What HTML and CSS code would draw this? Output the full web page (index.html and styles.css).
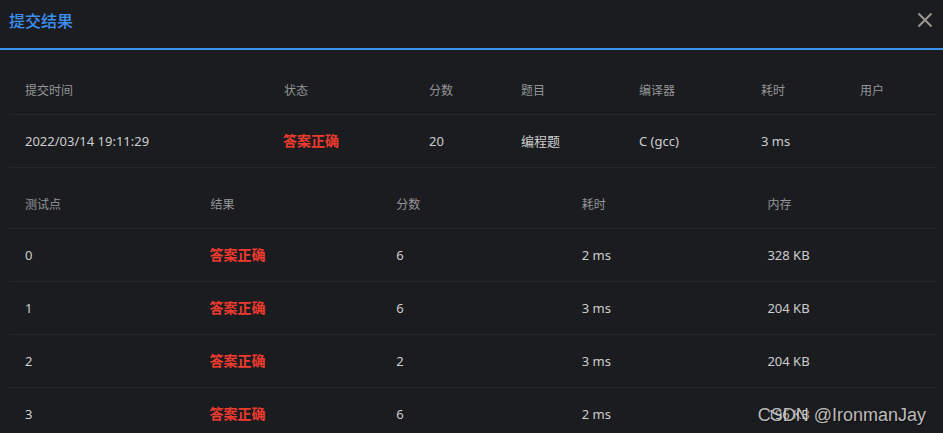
FILE: index.html
```html
<!DOCTYPE html>
<html lang="zh-CN">
<head>
<meta charset="utf-8">
<title>提交结果</title>
<link rel="stylesheet" href="styles.css">
</head>
<body>
<div class="dialog">
  <div class="dialog-header">
    <span class="dialog-title">提交结果</span>
    <button class="close-btn" aria-label="关闭">
      <svg width="16" height="16" viewBox="0 0 16 16"><path d="M1.5 1.5 L14.5 14.5 M14.5 1.5 L1.5 14.5" stroke="currentColor" stroke-width="2" fill="none"/></svg>
    </button>
  </div>
  <div class="dialog-body">
    <div class="table summary">
      <div class="row head">
        <div class="cell">提交时间</div>
        <div class="cell">状态</div>
        <div class="cell">分数</div>
        <div class="cell">题目</div>
        <div class="cell">编译器</div>
        <div class="cell">耗时</div>
        <div class="cell">用户</div>
      </div>
      <div class="row">
        <div class="cell">2022/03/14 19:11:29</div>
        <div class="cell ok">答案正确</div>
        <div class="cell">20</div>
        <div class="cell">编程题</div>
        <div class="cell">C (gcc)</div>
        <div class="cell">3 ms</div>
        <div class="cell"></div>
      </div>
    </div>
    <div class="table cases">
      <div class="row head">
        <div class="cell">测试点</div>
        <div class="cell">结果</div>
        <div class="cell">分数</div>
        <div class="cell">耗时</div>
        <div class="cell">内存</div>
      </div>
      <div class="row">
        <div class="cell">0</div>
        <div class="cell ok">答案正确</div>
        <div class="cell">6</div>
        <div class="cell">2 ms</div>
        <div class="cell">328 KB</div>
      </div>
      <div class="row">
        <div class="cell">1</div>
        <div class="cell ok">答案正确</div>
        <div class="cell">6</div>
        <div class="cell">3 ms</div>
        <div class="cell">204 KB</div>
      </div>
      <div class="row">
        <div class="cell">2</div>
        <div class="cell ok">答案正确</div>
        <div class="cell">2</div>
        <div class="cell">3 ms</div>
        <div class="cell">204 KB</div>
      </div>
      <div class="row">
        <div class="cell">3</div>
        <div class="cell ok">答案正确</div>
        <div class="cell">6</div>
        <div class="cell">2 ms</div>
        <div class="cell">196 KB</div>
      </div>
    </div>
  </div>
</div>
<div class="watermark">CSDN @IronmanJay</div>
</body>
</html>
```
FILE: styles.css
```css
html, body {
  margin: 0;
  padding: 0;
  height: 100%;
  overflow: hidden;
}
body {
  background: #1b1c1f;
  font-family: "Noto Sans", "Noto Sans CJK SC", sans-serif;
  color: #cdcdcf;
  position: relative;
}
.dialog-header {
  height: 38px;
  padding: 10px 10px 0 9px;
  border-bottom: 2px solid #3a92ef;
  display: flex;
  align-items: flex-start;
  justify-content: space-between;
}
.dialog-title {
  font-family: "Noto Sans CJK SC", sans-serif;
  font-size: 16px;
  line-height: 20px;
  font-weight: 500;
  color: #3d8ff0;
}
.close-btn {
  background: none;
  border: 0;
  padding: 0;
  margin-top: 2px;
  width: 16px;
  height: 16px;
  color: #9c9891;
  display: flex;
}
.dialog-body {
  padding: 16px 6px 0 9px;
  display: flex;
  flex-direction: column;
  gap: 12px;
}
.row {
  display: grid;
  height: 52px;
  align-items: center;
  border-bottom: 1px solid #26272b;
}
.row.head {
  height: 48px;
  font-family: "Noto Sans CJK SC", sans-serif;
  font-size: 12px;
  color: #939598;
}
.summary .row {
  grid-template-columns: 259px 145px 92px 118px 122px 99px 93px;
}
.cases .row {
  grid-template-columns: repeat(5, 1fr);
}
.cell {
  padding-left: 16px;
  font-size: 13px;
  line-height: 20px;
  white-space: nowrap;
}
.row.head .cell {
  font-size: 12px;
}
.cell.ok {
  font-family: "Noto Sans CJK SC", sans-serif;
  font-size: 14px;
  font-weight: 700;
  color: #ee3a2f;
  margin-top: -3px;
  padding-left: 15px;
}
.watermark {
  position: absolute;
  right: 17px;
  bottom: 7px;
  font-family: "Liberation Sans", sans-serif;
  font-size: 18px;
  color: rgba(235, 235, 235, 0.78);
  text-shadow: 1px 1px 1px rgba(0, 0, 0, 0.6);
}
```
